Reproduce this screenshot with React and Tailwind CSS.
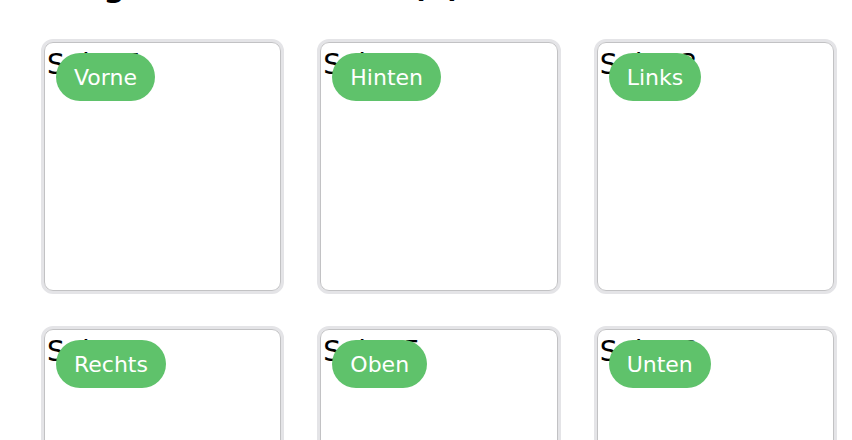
const sides = [
  { id: 1, label: "Vorne" },
  { id: 2, label: "Hinten" },
  { id: 3, label: "Links" },
  { id: 4, label: "Rechts" },
  { id: 5, label: "Oben" },
  { id: 6, label: "Unten" },
];

function SideCard({ side }) {
  return (
    <div className="relative h-[255px] rounded-[12px] border-[3px] border-[#e4e4e7] bg-white">
      <div className="h-full rounded-[9px] border border-[#c2c2c4] pl-[2px] pt-[5px]">
        <span className="text-[28px] leading-[34px] text-black">Seite {side.id}</span>
      </div>
      <span className="absolute left-[12px] top-[11px] flex h-12 items-center rounded-full bg-[#5fc26b] px-[18px] text-[22px] text-white">
        {side.label}
      </span>
    </div>
  );
}

export default function App() {
  return (
    <div className="min-h-[440px] overflow-hidden bg-white pl-[41px] pr-[15px] font-['DejaVu_Sans',sans-serif] text-black">
      <h2 className="-mt-[32px] mb-[33px] text-[30px] font-bold leading-[38px]">
        Ausgewählte Flächen (6)
      </h2>
      <div className="grid grid-cols-3 gap-x-[33px] gap-y-[32px]">
        {sides.map((side) => (
          <SideCard key={side.id} side={side} />
        ))}
      </div>
    </div>
  );
}
